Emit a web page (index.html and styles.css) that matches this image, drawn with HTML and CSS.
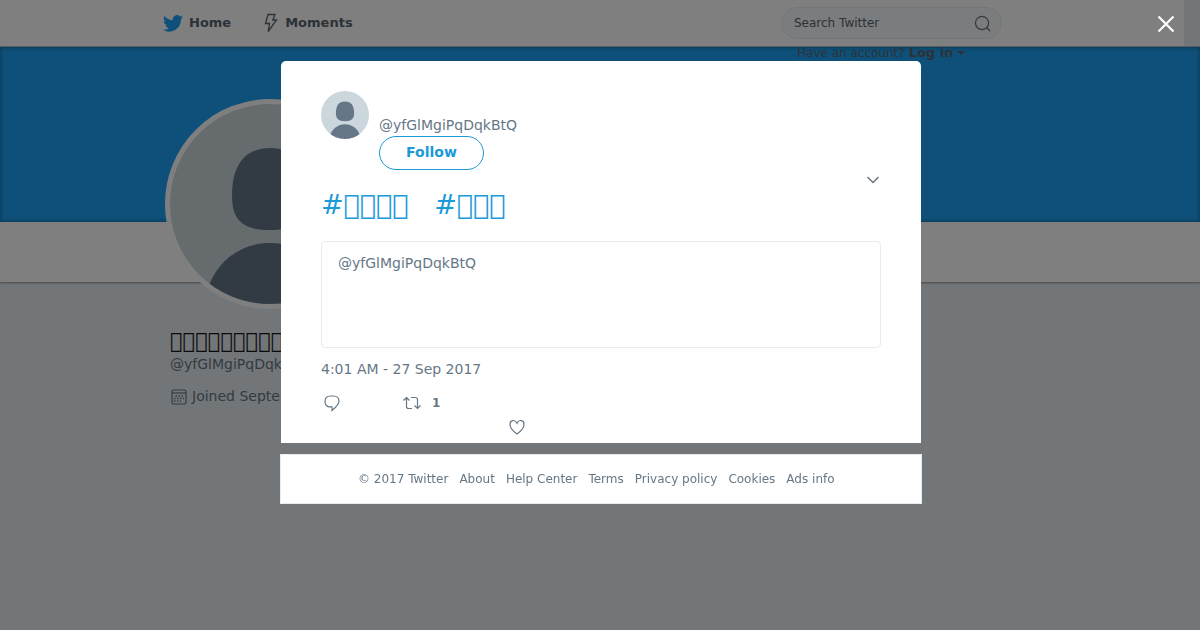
FILE: index.html
```html
<!DOCTYPE html>
<html lang="en">
<head>
<meta charset="utf-8">
<title>Twitter</title>
<link rel="stylesheet" href="styles.css">
</head>
<body>
<svg class="defs" aria-hidden="true">
  <symbol id="person" viewBox="0 0 200 200">
    <path d="M100 44C124 44 138 60 138 91C138 116 128 126 100 126C72 126 62 116 62 91C62 60 76 44 100 44Z"/>
    <path d="M38 184C48 156 71 139 100 139C129 139 152 156 162 184V200H38Z"/>
  </symbol>
</svg>
<div class="page">
  <header class="topbar">
    <nav class="topbar-inner">
      <a class="nav-link" href="#">
        <svg class="bird" viewBox="0 0 24 20"><path d="M24 2.400a9.800 9.800 0 0 1-2.800.8A4.900 4.900 0 0 0 23.300.5a9.900 9.900 0 0 1-3.100 1.200 4.900 4.900 0 0 0-8.400 4.500A14 14 0 0 1 1.700 1 4.900 4.900 0 0 0 3.200 7.500 4.900 4.900 0 0 1 1 6.900a4.900 4.900 0 0 0 4 4.900 5 5 0 0 1-2.200.1 4.900 4.900 0 0 0 4.600 3.400A9.900 9.900 0 0 1 0 17.400 14 14 0 0 0 21.500 5 10 10 0 0 0 24 2.400Z"/></svg>
        Home</a>
      <a class="nav-link moments" href="#">
        <svg class="bolt" viewBox="0 0 14 20"><path d="M4 1.500H11L8.800 7H12.500L4.200 18.500L5.500 10.500H1.500Z"/></svg>
        Moments</a>
      <form class="search">
        <input class="search-input" type="text" placeholder="Search Twitter" aria-label="Search Twitter">
        <button class="search-button" type="button" aria-label="Search"><svg viewBox="0 0 18 18"><circle cx="8.500" cy="8.500" r="7"/><path d="M13.500 13.500L17 17"/></svg></button>
      </form>
    </nav>
  </header>
  <div class="banner"><a class="login" href="#">Have an account? <b>Log in</b><span class="caret"></span></a></div>
  <div class="profile-bar"></div>
  <aside class="profile">
    <div class="avatar-large"><svg><use href="#person"/></svg></div>
    <h1 class="profile-name">&#xE1A0;&#xE1A1;&#xE1A2;&#xE1A3;&#xE1A4;&#xE1A5;&#xE1A6;&#xE1A7;&#xE1A8;</h1>
    <a class="profile-handle" href="#">@yfGlMgiPqDqkBtQ</a>
    <p class="joined"><svg viewBox="0 0 18 18"><rect x="2" y="3" width="14" height="14" rx="1.500"/><path d="M2 6H16"/><path class="dots" d="M5.500 9H14M4 11.500H14M4 14H11"/></svg>Joined September 2017</p>
  </aside>
</div>

<div class="overlay">
  <button class="close" type="button" aria-label="Close"><svg viewBox="0 0 18 18"><path d="M1.500 1.500L16.500 16.500M16.500 1.500L1.500 16.500"/></svg></button>
  <main class="tweet">
    <div class="author">
      <div class="avatar"><svg><use href="#person"/></svg></div>
      <div class="author-info">
        <a class="handle" href="#">@yfGlMgiPqDqkBtQ</a>
        <button class="follow" type="button">Follow</button>
      </div>
    </div>
    <button class="more" type="button" aria-label="More"><svg viewBox="0 0 14 8"><path d="M1.500 1L7 6.500L12.500 1"/></svg></button>
    <p class="tweet-text"><a href="#">#&#xE1A0;&#xE1A1;&#xE1A2;&#xE1A3;</a>   <a href="#">#&#xE1A4;&#xE1A5;&#xE1A6;</a></p>
    <div class="quote"><a class="handle" href="#">@yfGlMgiPqDqkBtQ</a></div>
    <p class="date">4:01 AM - 27 Sep 2017</p>
    <div class="actions">
      <button class="action" type="button" aria-label="Reply"><svg class="reply" viewBox="0 0 18 18"><path d="M7.500 2H10.500C13.800 2 16 4.200 16 7.200C16 10.500 13.500 12.500 9 16.500V12.800H7.500C4 12.800 2 10.500 2 7.400C2 4.200 4.200 2 7.500 2Z"/></svg></button>
      <button class="action" type="button" aria-label="Retweet"><svg class="retweet" viewBox="0 0 20 16"><path d="M1.500 5.500L4.500 2.500L7.500 5.500M4.500 3V11.500Q4.500 13.500 6.500 13.500H10M9 2.500H13Q15.500 2.500 15.500 4.500V13M12.500 10.500L15.500 13.500L18.500 10.500"/></svg><span>1</span></button>
    </div>
    <button class="action like" type="button" aria-label="Like"><svg viewBox="0 0 18 16"><path d="M9 15C5.500 12.500 2 9 2 5.200C2 1 7 0 9 4.300C11 0 16 1 16 5.200C16 9 12.500 12.500 9 15Z"/></svg></button>
  </main>
  <footer class="footer">
    <span>© 2017 Twitter</span>
    <a href="#">About</a>
    <a href="#">Help Center</a>
    <a href="#">Terms</a>
    <a href="#">Privacy policy</a>
    <a href="#">Cookies</a>
    <a href="#">Ads info</a>
  </footer>
</div>
</body>
</html>
```
FILE: styles.css
```css
* { box-sizing: border-box; }
body {
  margin: 0;
  min-height: 100vh;
  overflow: hidden;
  background: #e6ecf0;
  color: #657786;
  font: 14px/20px "DejaVu Sans", sans-serif;
}
a { color: inherit; text-decoration: none; }
p, h1 { margin: 0; }
button { padding: 0; border: 0; background: none; color: inherit; font: inherit; }
svg { display: block; fill: none; stroke: currentColor; }
.defs { position: absolute; width: 0; height: 0; }

.topbar { padding-right: 16px; border-bottom: 1px solid #b4bcc2; }
.topbar-inner {
  display: flex;
  align-items: center;
  height: 46px;
  padding: 0 182px 0 163px;
  background: #fff;
  font-size: 13px;
  font-weight: bold;
}
.nav-link { display: flex; align-items: center; gap: 6px; color: #58656f; }
.moments { margin-left: 33px; gap: 7px; }
.bird { width: 20px; height: 17px; fill: #1da1f2; stroke: none; }
.bolt { width: 14px; height: 20px; stroke-width: 1.3; }
.search {
  display: flex;
  align-items: center;
  width: 221px;
  height: 32px;
  margin-left: auto;
  padding: 0 10px 0 12px;
  border: 1px solid #e6ecf0;
  border-radius: 16px;
  background: #f5f8fa;
}
.search-input {
  flex: 1;
  min-width: 0;
  padding: 0;
  border: 0;
  outline: 0;
  background: none;
  font: 12px/16px "DejaVu Sans", sans-serif;
}
.search-input::placeholder { color: #58656f; opacity: 1; }
.search-button svg { width: 17px; height: 17px; stroke-width: 1.3; }

.banner {
  height: 175px;
  padding-left: 797px;
  background: #1da1f2;
  box-shadow: inset 0 0 4px rgba(0, 0, 0, .4);
  color: #58656f;
  font-size: 12px;
  line-height: 12px;
}
.login { display: flex; gap: 4px; align-items: center; }
.login b { font-size: 13px; }
.caret { border: 4px solid transparent; border-top-color: currentColor; border-bottom: 0; }
.profile-bar { height: 60px; background: #fff; box-shadow: 0 1px 2px rgba(0, 0, 0, .4); }
.profile { width: 300px; margin: -183px 0 0 165px; padding-left: 5px; position: relative; }
.avatar-large {
  width: 210px;
  height: 210px;
  margin-left: -5px;
  border: 5px solid #fff;
  border-radius: 50%;
  overflow: hidden;
  background: #ccd6dd;
}
.avatar-large svg, .avatar svg { width: 100%; height: 100%; fill: #657786; stroke: none; }
.profile-name { margin-top: 20px; color: #14171a; font-size: 21px; font-weight: normal; line-height: 24px; }
.profile-handle { display: block; margin-top: 1px; }
.joined { display: flex; align-items: center; gap: 4px; margin-top: 12px; }
.joined svg { width: 18px; height: 18px; stroke-width: 1.2; }
.joined .dots { stroke-width: 1.5; stroke-dasharray: 1.5 1.5; }

.overlay {
  position: fixed;
  inset: 0;
  padding: 61px 0 0 2px;
  background: rgba(0, 0, 0, .5);
}
.close { position: absolute; top: 15px; right: 25px; color: #fff; }
.close svg { width: 18px; height: 18px; stroke-width: 2.2; }
.tweet {
  max-width: 640px;
  margin: 0 auto;
  padding: 30px 40px 6px;
  border-radius: 5px 5px 0 0;
  background: #fff;
}
.author { display: flex; gap: 10px; }
.avatar { width: 48px; height: 48px; border-radius: 50%; overflow: hidden; background: #ccd6dd; }
.author-info { padding-top: 24px; }
.handle { display: block; }
.follow {
  width: 105px;
  height: 34px;
  margin-top: 1px;
  padding-bottom: 2px;
  border: 1px solid #1b9ad6;
  border-radius: 17px;
  color: #1b9ad9;
  font-weight: bold;
}
.more { display: block; margin: 6px 1px 0 auto; }
.more svg { width: 14px; height: 8px; stroke-width: 1.5; }
.tweet-text {
  margin-top: 5px;
  color: #1b9ad9;
  font-size: 27px;
  line-height: 32px;
  white-space: pre-wrap;
}
.quote {
  height: 107px;
  margin-top: 20px;
  padding: 11px 16px;
  border: 1px solid #e6ecf0;
  border-radius: 4px;
}
.date { margin-top: 11px; }
.actions { display: flex; gap: 61px; margin-top: 14px; }
.action { display: flex; align-items: center; gap: 10px; height: 20px; font-size: 12px; font-weight: bold; }
.action svg { stroke-width: 1.2; }
.reply { width: 18px; height: 18px; margin-left: 2px; }
.retweet { width: 20px; height: 16px; }
.like { margin: 4px 0 0 187px; }
.like svg { width: 18px; height: 16px; }
.footer {
  display: flex;
  gap: 11px;
  max-width: 642px;
  margin: 11px auto 0;
  padding: 15px 77px;
  border: 1px solid #e6ecf0;
  background: #fff;
  font-size: 12px;
  line-height: 18px;
  white-space: nowrap;
}
```
